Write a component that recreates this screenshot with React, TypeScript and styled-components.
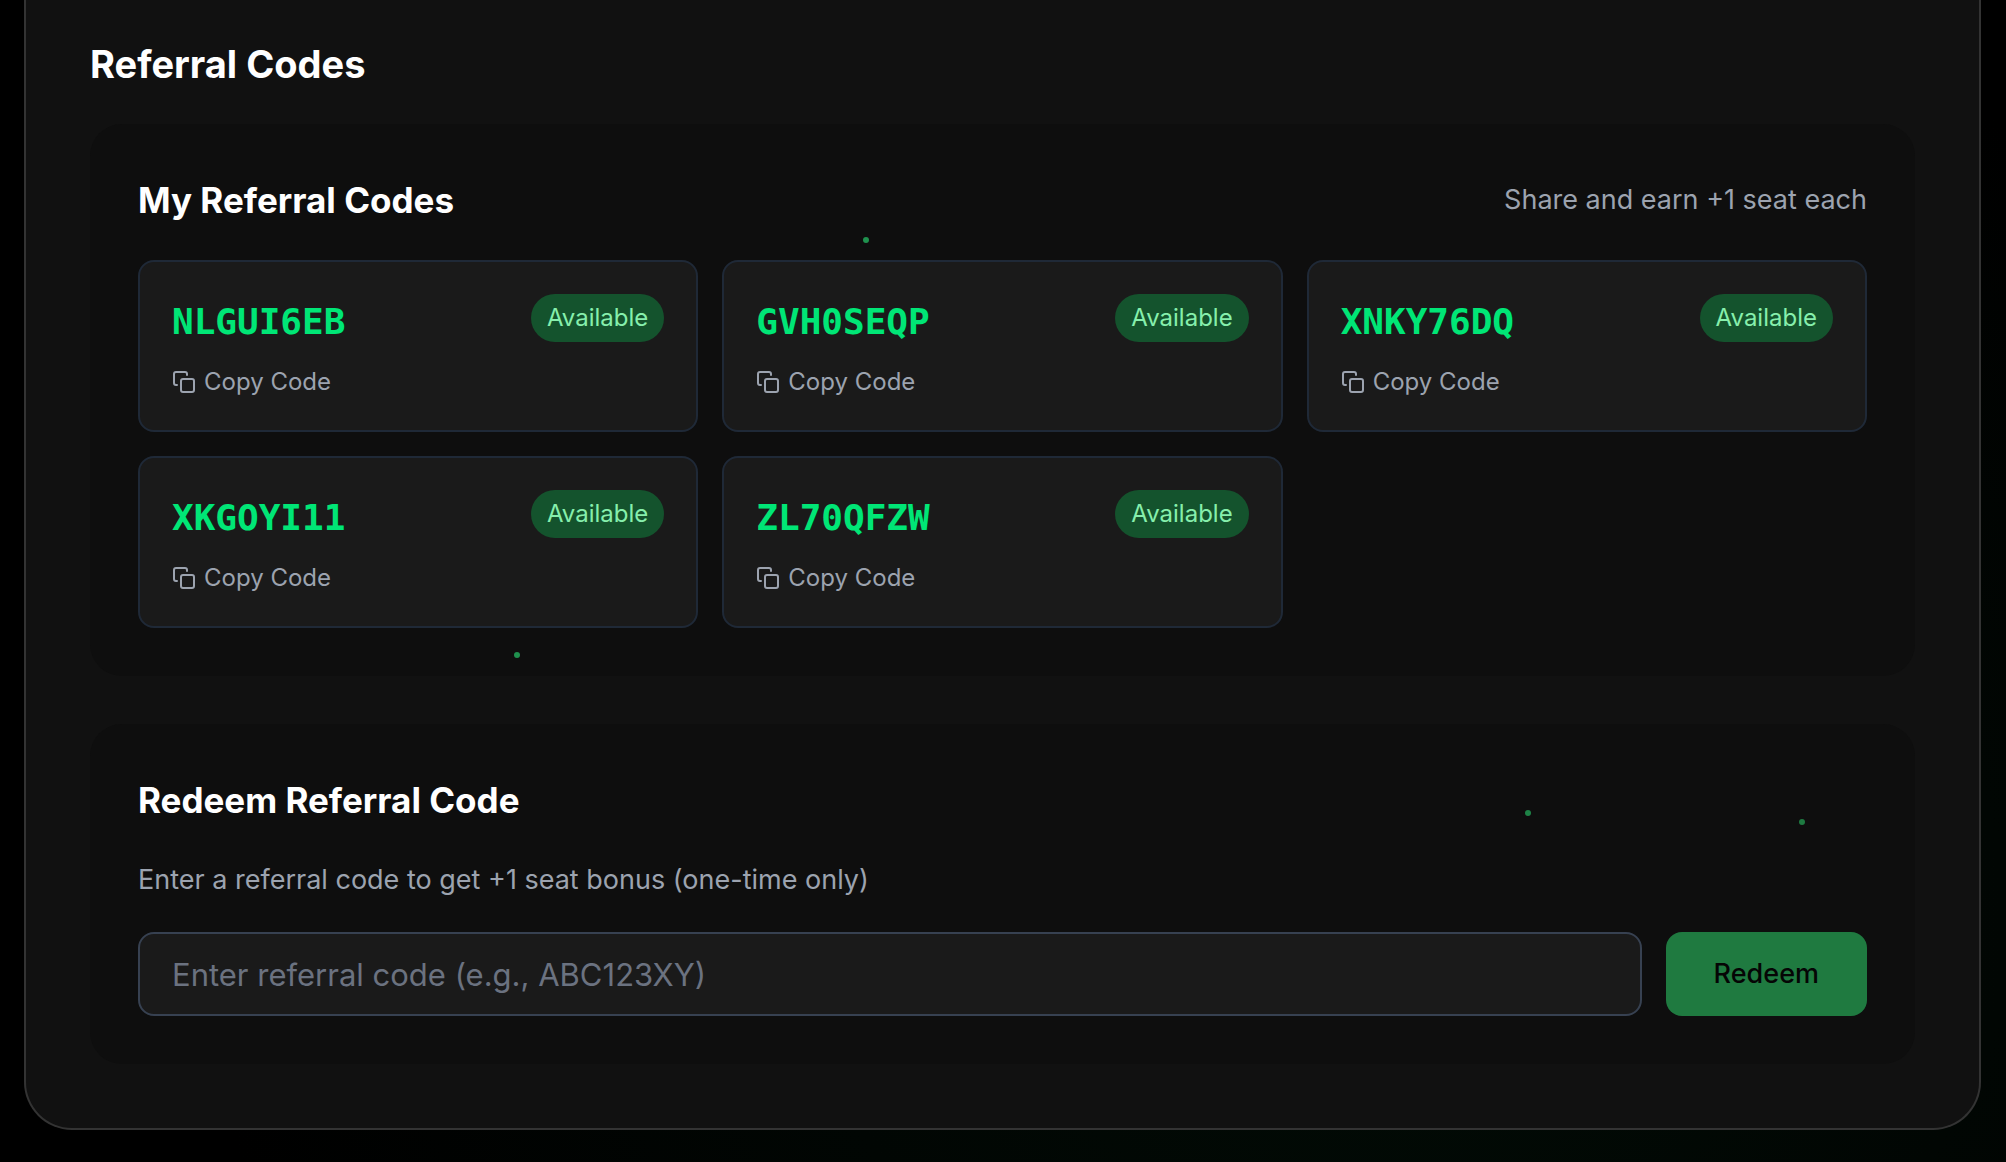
import React, { useState } from "react";
import styled, { createGlobalStyle } from "styled-components";

const GlobalStyle = createGlobalStyle`
  *, *::before, *::after { box-sizing: border-box; }
  body {
    margin: 0;
    background: #000;
    color: #fff;
    font-family: Inter, "Liberation Sans", sans-serif;
  }
  h2, h3, p, ul { margin: 0; padding: 0; }
  button, input { font: inherit; }
`;

const Page = styled.main`
  position: relative;
  min-height: 100vh;
  padding: 0 25px 32px 24px;
  background: radial-gradient(ellipse 60% 80% at 70% 80%, #020c06 0%, #000000 100%);
`;

const Shell = styled.section`
  padding: 36px 64px 64px;
  border: 2px solid #333;
  border-top: 0;
  border-radius: 0 0 48px 48px;
  background: #111;
`;

const PageTitle = styled.h2`
  margin-bottom: 32px;
  font-size: 38px;
  line-height: 56px;
  font-weight: 700;
`;

const Panels = styled.div`
  display: flex;
  flex-direction: column;
  gap: 48px;
`;

const Panel = styled.section`
  padding: 48px;
  border-radius: 32px;
  background: #0e0e0e;
`;

const PanelHeader = styled.header`
  display: flex;
  align-items: center;
  justify-content: space-between;
  margin-bottom: 32px;
`;

const PanelTitle = styled.h3`
  font-size: 35px;
  line-height: 56px;
  font-weight: 700;
`;

const Note = styled.p`
  display: block;
  color: #9ca3af;
  font-size: 27px;
  line-height: 40px;
`;

const CodeGrid = styled.ul`
  display: grid;
  grid-template-columns: repeat(3, minmax(0, 1fr));
  gap: 24px;
  list-style: none;
`;

const CodeCard = styled.li`
  padding: 32px;
  border: 2px solid #1f2937;
  border-radius: 16px;
  background: #1a1a1a;
`;

const CodeRow = styled.div`
  display: flex;
  align-items: flex-start;
  justify-content: space-between;
  margin-bottom: 16px;
`;

const Code = styled.code`
  color: #00e676;
  font-family: "DejaVu Sans Mono", "Liberation Mono", monospace;
  font-size: 36px;
  line-height: 56px;
  font-weight: 700;
`;

const Badge = styled.span`
  padding: 8px 16px;
  border-radius: 24px;
  background: #14532d;
  color: #86efac;
  font-size: 24px;
  line-height: 32px;
`;

const CopyButton = styled.button`
  display: flex;
  align-items: center;
  gap: 8px;
  padding: 0;
  border: 0;
  background: none;
  color: #9ca3af;
  font-size: 24px;
  line-height: 32px;
  cursor: pointer;
`;

const RedeemForm = styled.form`
  display: flex;
  gap: 24px;
  margin-top: 32px;
`;

const CodeInput = styled.input`
  flex: 1;
  min-width: 0;
  height: 84px;
  padding: 0 32px;
  border: 2px solid #374151;
  border-radius: 16px;
  background: #1a1a1a;
  color: #fff;
  font-size: 31px;
  outline: none;
  &::placeholder { color: #6b7280; opacity: 1; }
`;

const RedeemButton = styled.button`
  padding: 0 48px;
  border: 0;
  border-radius: 16px;
  background: #1f7a40;
  color: #050505;
  font-size: 27px;
  line-height: 40px;
  font-weight: 500;
  cursor: pointer;
`;

const Particle = styled.i<{ $x: number; $y: number; $color: string }>`
  position: absolute;
  left: ${(p) => p.$x}px;
  top: ${(p) => p.$y}px;
  width: 6px;
  height: 6px;
  border-radius: 50%;
  background: ${(p) => p.$color};
  pointer-events: none;
`;

const codes = ["NLGUI6EB", "GVH0SEQP", "XNKY76DQ", "XKGOYI11", "ZL70QFZW"];

const particles = [
  { x: 863, y: 237, color: "#1f914e" },
  { x: 514, y: 652, color: "#1f914e" },
  { x: 1525, y: 810, color: "#1e8347" },
  { x: 1799, y: 819, color: "#1e7a41" },
];

function CopyIcon() {
  return (
    <svg width="24" height="24" viewBox="0 0 24 24" fill="none" stroke="currentColor" strokeWidth="2" strokeLinecap="round" strokeLinejoin="round" aria-hidden="true">
      <rect x="9" y="9" width="13" height="13" rx="2" />
      <path d="M5 15H4a2 2 0 0 1-2-2V4a2 2 0 0 1 2-2h9a2 2 0 0 1 2 2v1" />
    </svg>
  );
}

export default function App() {
  const [value, setValue] = useState("");
  return (
    <>
      <GlobalStyle />
      <Page>
        <Shell>
          <PageTitle>Referral Codes</PageTitle>
          <Panels>
            <Panel>
              <PanelHeader>
                <PanelTitle>My Referral Codes</PanelTitle>
                <Note>Share and earn +1 seat each</Note>
              </PanelHeader>
              <CodeGrid>
                {codes.map((code) => (
                  <CodeCard key={code}>
                    <CodeRow>
                      <Code>{code}</Code>
                      <Badge>Available</Badge>
                    </CodeRow>
                    <CopyButton type="button" onClick={() => navigator.clipboard?.writeText(code)}>
                      <CopyIcon />
                      Copy Code
                    </CopyButton>
                  </CodeCard>
                ))}
              </CodeGrid>
            </Panel>
            <Panel>
              <PanelHeader>
                <PanelTitle>Redeem Referral Code</PanelTitle>
              </PanelHeader>
              <Note as="label" htmlFor="referral-code">
                Enter a referral code to get +1 seat bonus (one-time only)
              </Note>
              <RedeemForm onSubmit={(e) => e.preventDefault()}>
                <CodeInput
                  id="referral-code"
                  type="text"
                  placeholder="Enter referral code (e.g., ABC123XY)"
                  value={value}
                  onChange={(e) => setValue(e.target.value)}
                />
                <RedeemButton type="submit">Redeem</RedeemButton>
              </RedeemForm>
            </Panel>
          </Panels>
        </Shell>
        {particles.map((p) => (
          <Particle key={p.x} $x={p.x} $y={p.y} $color={p.color} />
        ))}
      </Page>
    </>
  );
}
